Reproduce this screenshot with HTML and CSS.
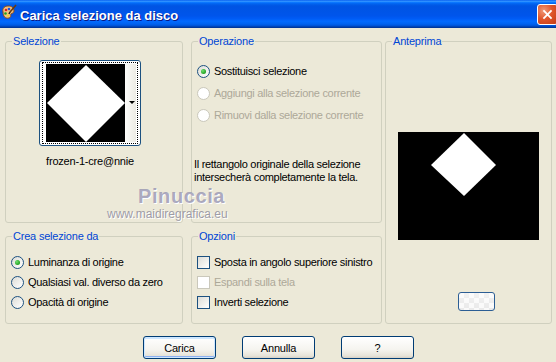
FILE: index.html
```html
<!DOCTYPE html>
<html lang="it">
<head>
    <meta charset="UTF-8">
    <meta name="viewport" content="width=device-width, initial-scale=1.0">
    <title>Carica selezione da disco</title>
    <link rel="stylesheet" href="styles.css">
</head>
<body>
    <div class="window">
        <div class="titlebar">
            <svg class="app-icon" width="16" height="16" viewBox="0 0 16 16">
                <path d="M2 8 C1 4 4 2 7 2 C11 2 13 4 13 7 C13 9 11 9 10 10 C9 11 11 13 8 14 C4 15 2 12 2 8 Z" fill="#f0c080" stroke="#8a4a1a" stroke-width="1"/>
                <circle cx="5" cy="6" r="1.3" fill="#e02020"/>
                <circle cx="8" cy="5" r="1.3" fill="#2050e0"/>
                <circle cx="4.5" cy="9.5" r="1.3" fill="#20a020"/>
                <circle cx="7" cy="11.5" r="1.1" fill="#f0e020"/>
                <path d="M15 1 L9 8" stroke="#6a3a10" stroke-width="1.6"/>
                <path d="M9 8 L8 10" stroke="#202020" stroke-width="1.6"/>
            </svg>
            <span class="title">Carica selezione da disco</span>
            <span class="close">
                <svg width="21" height="21" viewBox="0 0 21 21">
                    <path d="M6 6 L15 15 M15 6 L6 15" stroke="#fff" stroke-width="2"/>
                </svg>
            </span>
        </div>

        <div class="client">
            <div class="groups">
                <fieldset class="group g-sel">
                    <legend>Selezione</legend>
                    <div class="picker">
                        <div class="thumb">
                            <div class="thumb-focus">
                                <svg class="thumb-img" width="79" height="78" viewBox="0 0 79 78">
                                    <rect width="79" height="78" fill="#000"/>
                                    <polygon points="40,1 1,39 40,78 79,39" fill="#fff"/>
                                </svg>
                                <span class="thumb-drop"></span>
                            </div>
                        </div>
                        <div class="thumb-name">frozen-1-cre@nnie</div>
                    </div>
                </fieldset>

                <fieldset class="group g-op">
                    <legend>Operazione</legend>
                    <div class="options op-list">
                        <div class="opt"><span class="radio checked"></span>Sostituisci selezione</div>
                        <div class="opt disabled"><span class="radio"></span>Aggiungi alla selezione corrente</div>
                        <div class="opt disabled"><span class="radio"></span>Rimuovi dalla selezione corrente</div>
                    </div>
                    <p class="note">Il rettangolo originale della selezione<br>intersecherà completamente la tela.</p>
                </fieldset>

                <fieldset class="group g-prev">
                    <legend>Anteprima</legend>
                    <svg class="preview" width="141" height="108" viewBox="0 0 141 108">
                        <rect width="141" height="108" fill="#000"/>
                        <polygon points="66,1 33,33 66,64 98,33" fill="#fff"/>
                    </svg>
                    <span class="zoom-btn"></span>
                </fieldset>

                <fieldset class="group g-crea">
                    <legend>Crea selezione da</legend>
                    <div class="options side-list">
                        <div class="opt"><span class="radio checked"></span>Luminanza di origine</div>
                        <div class="opt"><span class="radio"></span>Qualsiasi val. diverso da zero</div>
                        <div class="opt"><span class="radio"></span>Opacità di origine</div>
                    </div>
                </fieldset>

                <fieldset class="group g-opz">
                    <legend>Opzioni</legend>
                    <div class="options side-list">
                        <div class="opt"><span class="check"></span>Sposta in angolo superiore sinistro</div>
                        <div class="opt disabled"><span class="check"></span>Espandi sulla tela</div>
                        <div class="opt"><span class="check"></span>Inverti selezione</div>
                    </div>
                </fieldset>
            </div>

            <div class="buttons">
                <button class="btn default">Carica</button>
                <button class="btn">Annulla</button>
                <button class="btn">?</button>
            </div>

            <!-- firma sopra la finestra -->
            <div class="watermark">
                <span class="wm-name">Pinuccia</span>
                <span class="wm-url">www.maidiregrafica.eu</span>
            </div>
        </div>
    </div>
</body>
</html>
```

FILE: styles.css
```css
body {
    margin: 0;
    background: #ece9d8;
    font-family: "Liberation Sans", Arial, sans-serif;
    font-size: 11px;
    color: #000;
}

.window {
    width: 556px;
    height: 362px;
    overflow: hidden;
    background: #ece9d8;
}

.titlebar {
    height: 28px;
    display: flex;
    align-items: center;
    background: linear-gradient(to bottom, #0058ee 0%, #3593ff 4%, #288eff 6%, #127dff 8%, #036ffc 10%, #0262ee 14%, #0057e5 20%, #0054e3 24%, #0055eb 56%, #005bf5 66%, #026afe 76%, #0062ef 86%, #0052d6 92%, #0040ab 96%, #003092 100%);
}

.app-icon {
    margin: -4px 3px 0 1px;
}

.title {
    flex: 1;
    color: #fff;
    font-weight: bold;
    font-size: 13px;
    margin-top: 2px;
    text-shadow: 1px 1px 0 #0a1883;
}

.close {
    width: 21px;
    height: 21px;
    margin-right: -2px;
    margin-top: 1px;
    box-sizing: border-box;
    border: 1px solid #fff;
    border-radius: 3px;
    background: radial-gradient(circle at 30% 30%, #f09a78 0%, #e0562c 45%, #c23a14 100%);
    display: flex;
    align-items: center;
    justify-content: center;
}

.close svg {
    width: 19px;
    height: 19px;
}

.client {
    position: relative;
    padding: 7px 4px 0 5px;
}

.groups {
    display: grid;
    grid-template-columns: 186px 194px 167px;
    grid-template-rows: 188px 94px;
    row-gap: 7px;
}

.group {
    margin: 0;
    padding: 0;
    min-width: 0;
    box-sizing: border-box;
    height: 100%;
    border: 1px solid #d0d0bf;
    border-radius: 3px;
}

.group legend {
    margin-left: 6px;
    padding: 0 1px;
    line-height: 13px;
    color: #0046d5;
    letter-spacing: -0.2px;
}

.g-sel { grid-column: 1; grid-row: 1; width: 178px; }
.g-op { grid-column: 2; grid-row: 1; width: 191px; }
.g-prev { grid-column: 3; grid-row: 1 / 3; width: 167px; }
.g-crea { grid-column: 1; grid-row: 2; width: 178px; }
.g-opz { grid-column: 2; grid-row: 2; width: 191px; }

/* Selezione */
.picker {
    display: inline-flex;
    flex-direction: column;
    align-items: center;
    margin: 12px 0 0 33px;
}

.thumb {
    border: 1px solid #1c5180;
    border-radius: 3px;
    padding: 1px 2px;
    background: #fff;
}

.thumb-focus {
    display: flex;
    border: 1px dotted #000;
    padding: 1px 1px 1px 3px;
}

.thumb-img {
    display: block;
}

.thumb-drop {
    position: relative;
    width: 11px;
    background: linear-gradient(to right, #fdfdfb, #ecebe4);
}

.thumb-drop::after {
    content: "";
    position: absolute;
    right: 1px;
    top: 37px;
    border-left: 3px solid transparent;
    border-right: 3px solid transparent;
    border-top: 3px solid #000;
}

.thumb-name {
    margin-top: 9px;
    line-height: 13px;
    letter-spacing: -0.2px;
}

/* option lists */
.options {
    display: flex;
    flex-direction: column;
    margin-left: 5px;
}

.op-list {
    margin-top: 16px;
    gap: 8px;
}

.side-list {
    margin-top: 12px;
    gap: 6px;
}

.opt {
    display: flex;
    align-items: center;
    gap: 4px;
    height: 14px;
    white-space: nowrap;
    letter-spacing: -0.3px;
}

.opt.disabled {
    color: #aca899;
}

.radio {
    position: relative;
    width: 13px;
    height: 13px;
    flex: none;
    box-sizing: border-box;
    border: 1px solid #1c5180;
    border-radius: 50%;
    background: linear-gradient(135deg, #dcdcd5 0%, #f2f2ef 60%, #fff 100%);
}

.radio.checked::after {
    content: "";
    position: absolute;
    left: 3px;
    top: 3px;
    width: 5px;
    height: 5px;
    border-radius: 50%;
    background: radial-gradient(circle at 35% 35%, #6fe06f, #21a121 70%);
}

.disabled .radio,
.disabled .check {
    border-color: #cac8bb;
    background: #fff;
}

.check {
    width: 13px;
    height: 13px;
    flex: none;
    box-sizing: border-box;
    border: 1px solid #1c5180;
    background: linear-gradient(135deg, #dcdcd7 0%, #f5f5f2 70%, #fff 100%);
}

.note {
    margin: 36px 0 0 2px;
    line-height: 13px;
    letter-spacing: -0.3px;
}

/* Anteprima */
.preview {
    display: block;
    margin: 84px auto 0;
}

.zoom-btn {
    display: block;
    width: 37px;
    height: 19px;
    margin: 52px 0 0 72px;
    box-sizing: border-box;
    border: 1px solid #2c5e94;
    border-radius: 3px;
    background:
        linear-gradient(rgba(255, 255, 255, 0.5), rgba(255, 255, 255, 0.2)),
        conic-gradient(#e4e4e4 25%, #f8f8f8 0 50%, #e4e4e4 0 75%, #f8f8f8 0) 0 0 / 10px 10px;
}

/* bottoni */
.buttons {
    display: flex;
    justify-content: center;
    gap: 26px;
    margin-top: 12px;
}

.btn {
    width: 73px;
    height: 23px;
    padding: 0;
    font-family: inherit;
    font-size: 11px;
    letter-spacing: -0.2px;
    color: #000;
    border: 1px solid #003c74;
    border-radius: 3px;
    background: linear-gradient(to bottom, #fff 0%, #f5f4ef 60%, #e6e3d8 90%, #d6d0c5 100%);
}

.btn.default {
    box-shadow: inset 0 0 0 1px #cee7ff, inset 0 -2px 0 #8cb0f0, inset 0 2px 0 #cee7ff;
}

/* firma */
.watermark {
    position: absolute;
    left: 107px;
    top: 157px;
    display: flex;
    flex-direction: column;
    pointer-events: none;
}

.wm-name {
    margin-left: 31px;
    font-size: 20px;
    font-weight: bold;
    line-height: 22px;
    letter-spacing: 0.6px;
    color: rgba(150, 148, 176, 0.8);
    text-shadow: 1px 1px 0 #fff;
}

.wm-url {
    font-size: 12px;
    line-height: 14px;
    color: rgba(135, 134, 150, 0.8);
    text-shadow: 1px 1px 0 #fff;
}
```
